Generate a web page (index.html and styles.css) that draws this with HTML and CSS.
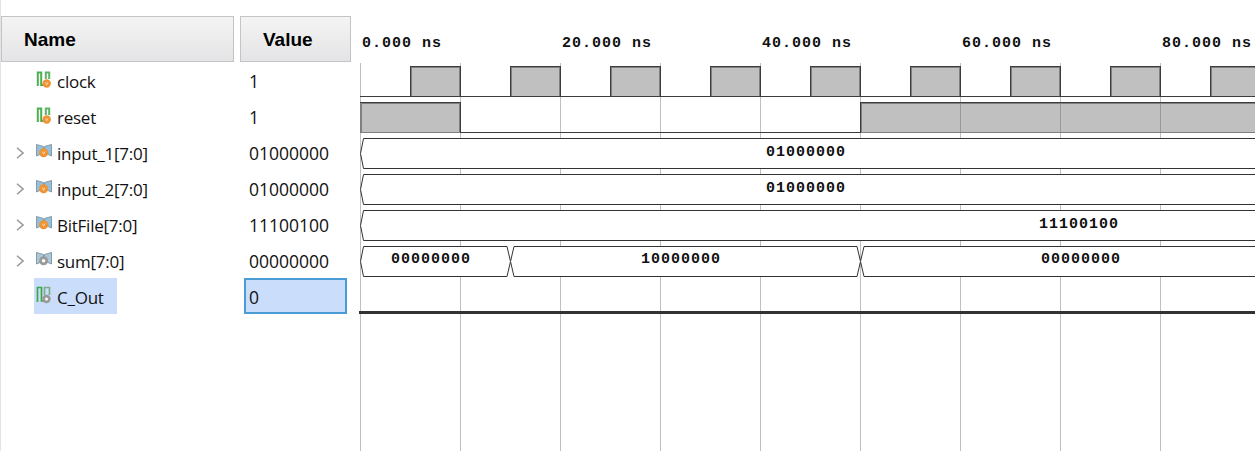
FILE: index.html
```html
<!DOCTYPE html>
<html lang="en">

<head>
    <meta charset="UTF-8" />
    <title>Waveform</title>
    <link rel="stylesheet" href="styles.css">
</head>

<body>
    <!-- shared icons -->
    <svg class="defs" width="0" height="0">
        <symbol id="wireIn" viewBox="0 0 16 18">
            <path d="M1.800 16V2.500H5.200V15H9" fill="none" stroke="#4caf50" stroke-width="2" />
            <path d="M9.800 9V2.500H13.200V9" fill="none" stroke="#5cb565" stroke-width="2" />
            <circle cx="10.700" cy="13.500" r="4.200" fill="#ee9434" />
            <path d="M9.500 12.300L10.700 14.800L11.900 12.300" fill="none" stroke="#fde3c4" stroke-width="0.800" />
        </symbol>
        <symbol id="wireOut" viewBox="0 0 16 18">
            <path d="M1.500 16V1.500H5.500V15H9" fill="none" stroke="#3fa648" stroke-width="1.700" />
            <path d="M8.500 9V1.500H13.500V9" fill="none" stroke="#7fae86" stroke-width="1.700" />
            <circle cx="10.500" cy="13" r="4.200" fill="#9a9a9a" />
            <circle cx="10.500" cy="13" r="1.500" fill="#fff" />
        </symbol>
        <symbol id="busIn" viewBox="0 0 16 18">
            <path d="M0.500 2.500L7.500 4.500V11L0.500 14ZM15.500 2.500L8.500 4.500V11L15.500 14Z" fill="#93c0dc" stroke="#8a9aa5" />
            <circle cx="7.600" cy="10.800" r="4.500" fill="#ee9434" />
            <path d="M6.300 9.500L7.600 12.300L8.900 9.500" fill="none" stroke="#fde3c4" stroke-width="0.800" />
        </symbol>
        <symbol id="busOut" viewBox="0 0 16 18">
            <path d="M0.500 2.500L7.500 4.500V11L0.500 14ZM15.500 2.500L8.500 4.500V11L15.500 14Z" fill="#a9c8da" stroke="#8a9aa5" />
            <circle cx="7.600" cy="10.800" r="4.500" fill="#9a9a9a" />
            <circle cx="7.600" cy="10.800" r="1.700" fill="#fff" />
        </symbol>
        <symbol id="chevron" viewBox="0 0 8 12">
            <path d="M1 0.800L7 6L1 11.200" fill="none" stroke="#999" stroke-width="1.500" />
        </symbol>
        <g id="pulse">
            <rect x="0" y="66" width="50" height="30" fill="#c0c0c0" />
            <path class="soft" d="M1.500 96V67.500H49.500V96" />
            <path class="edge" d="M-50 96.500H50.500V66.500H0.500V96" />
        </g>
    </svg>

    <div class="names">
        <div class="head">Name</div>
        <div class="row"><span class="slot"></span><span class="name"><svg class="icon"><use href="#wireIn" /></svg>clock</span></div>
        <div class="row"><span class="slot"></span><span class="name"><svg class="icon"><use href="#wireIn" /></svg>reset</span></div>
        <div class="row"><span class="slot"><svg class="chev"><use href="#chevron" /></svg></span><span class="name"><svg class="icon"><use href="#busIn" /></svg>input_1[7:0]</span></div>
        <div class="row"><span class="slot"><svg class="chev"><use href="#chevron" /></svg></span><span class="name"><svg class="icon"><use href="#busIn" /></svg>input_2[7:0]</span></div>
        <div class="row"><span class="slot"><svg class="chev"><use href="#chevron" /></svg></span><span class="name"><svg class="icon"><use href="#busIn" /></svg>BitFile[7:0]</span></div>
        <div class="row"><span class="slot"><svg class="chev"><use href="#chevron" /></svg></span><span class="name"><svg class="icon"><use href="#busOut" /></svg>sum[7:0]</span></div>
        <div class="row"><span class="slot"></span><span class="name selected"><svg class="icon"><use href="#wireOut" /></svg>C_Out</span></div>
    </div>

    <div class="values">
        <div class="head">Value</div>
        <div class="cell">1</div>
        <div class="cell">1</div>
        <div class="cell">01000000</div>
        <div class="cell">01000000</div>
        <div class="cell">11100100</div>
        <div class="cell">00000000</div>
        <div class="cell selected">0</div>
    </div>

    <svg class="wave" viewBox="359 0 896 451" width="896" height="451">
        <!-- time ruler -->
        <g class="label">
            <text x="362" y="47">0.000 ns</text>
            <text x="562" y="47">20.000 ns</text>
            <text x="762" y="47">40.000 ns</text>
            <text x="962" y="47">60.000 ns</text>
            <text x="1162" y="47">80.000 ns</text>
        </g>

        <path class="grid" d="M360.500 63V451M460.500 63V451M560.500 63V451M660.500 63V451M760.500 63V451M860.500 63V451M960.500 63V451M1060.500 63V451M1160.500 63V451" />

        <!-- clock -->
        <use href="#pulse" x="410" />
        <use href="#pulse" x="510" />
        <use href="#pulse" x="610" />
        <use href="#pulse" x="710" />
        <use href="#pulse" x="810" />
        <use href="#pulse" x="910" />
        <use href="#pulse" x="1010" />
        <use href="#pulse" x="1110" />
        <use href="#pulse" x="1210" />

        <!-- reset -->
        <rect x="360" y="102" width="100" height="30" fill="#c0c0c0" />
        <rect x="860" y="102" width="395" height="30" fill="#c0c0c0" />
        <path class="grid over" d="M960.500 103V132M1060.500 103V132M1160.500 103V132" />
        <path class="soft" d="M361.500 132V103.500H459.500V132M361 132.500H460M861.500 132V103.500H1255M861 132.500H1255" />
        <path class="soft" d="M360.500 103V133" />
        <path class="edge" d="M360 102.500H460.500V132.500H860.500V102.500H1255" />

        <!-- buses -->
        <path class="bus" d="M360.500 153.500L363.500 138.500H1256V168.500H363.500Z" />
        <path class="bus" d="M360.500 189.500L363.500 174.500H1256V204.500H363.500Z" />
        <path class="bus" d="M360.500 225.500L363.500 210.500H1256V240.500H363.500Z" />
        <path class="bus" d="M360.500 261.500L363.500 246.500H507L510.500 261.500L507 276.500H363.500Z" />
        <path class="bus" d="M510.500 261.500L514 246.500H857L860.500 261.500L857 276.500H514Z" />
        <path class="bus" d="M860.500 261.500L864 246.500H1256V276.500H864Z" />
        <g class="label">
            <text x="766" y="156">01000000</text>
            <text x="766" y="192">01000000</text>
            <text x="1039" y="228">11100100</text>
            <text x="391" y="263">00000000</text>
            <text x="641" y="263">10000000</text>
            <text x="1041" y="263">00000000</text>
        </g>

        <!-- C_Out -->
        <rect x="359" y="311" width="896" height="3" fill="#333" />
    </svg>
</body>

</html>
```

FILE: styles.css
```css
body {
    margin: 0;
    height: 451px;
    overflow: hidden;
    display: flex;
    background: #fff;
    color: #111;
    border-left: 1px solid #e4e4e4;
    font-family: "Open Sans", sans-serif;
    font-size: 17px;
}

.defs {
    position: absolute;
}

.head {
    box-sizing: border-box;
    height: 46px;
    margin-top: 16px;
    padding-top: 2px;
    display: flex;
    align-items: center;
    border: 1px solid #c4c4c4;
    background: linear-gradient(#f4f4f4, #e4e4e6);
    font-family: "Liberation Sans", sans-serif;
    font-size: 19px;
    font-weight: bold;
    color: #000;
}

.names {
    width: 233px;
    margin-right: 6px;
}

.names .head {
    padding-left: 22px;
}

.values {
    width: 111px;
    margin-right: 8px;
}

.values .head {
    padding-left: 22px;
}

.row {
    height: 36px;
    display: flex;
    padding-left: 15px;
}

.slot {
    width: 18px;
    display: flex;
    align-items: center;
}

.chev {
    width: 8px;
    height: 12px;
    margin-top: 2px;
}

.name {
    display: flex;
    align-items: center;
    gap: 5px;
    padding: 2px 13px 0 2px;
    letter-spacing: -0.25px;
}

.icon {
    width: 16px;
    height: 18px;
    margin-top: -4px;
}

.selected {
    background: #cadefc;
}

.cell {
    box-sizing: border-box;
    height: 36px;
    margin: 0 4px;
    padding: 2px 0 0 3px;
    display: flex;
    align-items: center;
    border: 2px solid transparent;
    font-size: 17.500px;
}

.cell.selected {
    border-color: #4a9bd6;
}

.wave {
    flex: none;
}

.grid {
    fill: none;
    stroke: #c0c0c0;
    shape-rendering: crispEdges;
}

.grid.over {
    stroke: #999;
}

.edge {
    fill: none;
    stroke: #3c3c3c;
    shape-rendering: crispEdges;
}

.soft {
    fill: none;
    stroke: #808080;
    shape-rendering: crispEdges;
}

.bus {
    fill: #fff;
    stroke: #333;
}

.label text {
    font-family: "Liberation Mono", monospace;
    font-size: 15px;
    font-weight: bold;
    letter-spacing: 1px;
    fill: #111;
}
```
